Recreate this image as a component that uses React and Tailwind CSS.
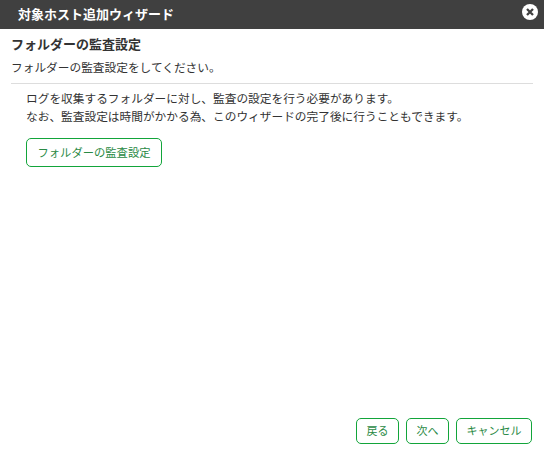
export default function App() {
  return (
    <div className="w-[544px] h-[453px] bg-white flex flex-col overflow-hidden font-['Liberation_Sans','Noto_Sans_CJK_JP',sans-serif] text-[#333333]">
      <div className="h-[29px] shrink-0 bg-[#404040] flex items-center justify-between pl-[18px] pr-[6px]">
        <span className="text-white font-bold text-[13px] leading-none">対象ホスト追加ウィザード</span>
        <svg width="16" height="16" viewBox="0 0 16 16" className="-mt-[5px]">
          <circle cx="8" cy="8" r="8" fill="#ffffff" />
          <path d="M5 5 L11 11 M11 5 L5 11" stroke="#404040" strokeWidth="2.3" />
        </svg>
      </div>
      <div className="flex-1 flex flex-col px-[11px] pt-[8px] pb-[9px]">
        <div className="text-[13px] leading-[16px] font-bold">フォルダーの監査設定</div>
        <div className="text-[11.7px] leading-[16px] mt-[7px]">フォルダーの監査設定をしてください。</div>
        <div className="border-b border-[#dddddd] mt-[7px]" />
        <div className="pl-[15px] mt-[6px] text-[11.7px] leading-[18px]">
          <p>ログを収集するフォルダーに対し、監査の設定を行う必要があります。</p>
          <p>なお、監査設定は時間がかかる為、このウィザードの完了後に行うこともできます。</p>
          <button className="block mt-[12px] h-[29px] w-[136px] rounded-[5px] border border-[#12a53a] bg-white text-[#2a8a45] text-[11.3px]">フォルダーの監査設定</button>
        </div>
        <div className="mt-auto flex justify-end gap-[7px] pr-[1px]">
          <button className="h-[26px] w-[43px] rounded-[5px] border border-[#12a53a] bg-white text-[#2a8a45] text-[11px]">戻る</button>
          <button className="h-[26px] w-[43px] rounded-[5px] border border-[#12a53a] bg-white text-[#2a8a45] text-[11px]">次へ</button>
          <button className="h-[26px] w-[76px] rounded-[5px] border border-[#12a53a] bg-white text-[#2a8a45] text-[11px]">キャンセル</button>
        </div>
      </div>
    </div>
  );
}
